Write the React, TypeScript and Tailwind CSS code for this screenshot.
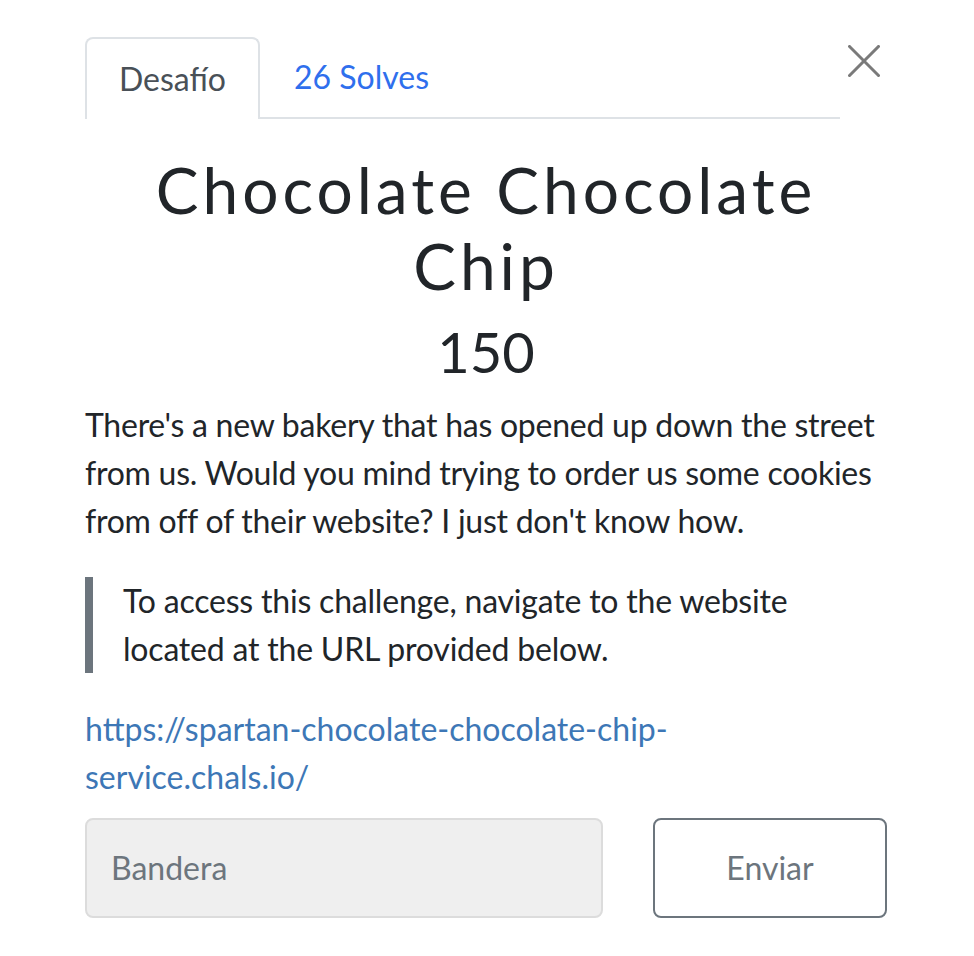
import React from "react";

export default function App() {
  return (
    <div
      className="w-[974px] h-[956px] bg-white text-[#212529]"
      style={{ fontFamily: "Lato, 'Noto Sans', sans-serif" }}
    >
      <div className="pl-[85px] pr-[87px] pt-[37px]">
        <div className="flex items-start">
          <div className="flex flex-1 border-b-2 border-[#dee2e6] mr-[7px]">
            <div className="h-[82px] mb-[-2px] px-[32px] flex items-center border-2 border-b-0 border-[#dee2e6] rounded-t-[8px] bg-white text-[#495057] text-[32px]">
              Desafío
            </div>
            <div className="h-[80px] px-[34px] flex items-center text-[#2f6fed] text-[32px]">
              26 Solves
            </div>
          </div>
          <button className="mt-[8px] w-[40px] h-[32px] flex items-center justify-end pr-[7px]">
            <svg width="32" height="32" viewBox="0 0 32 32">
              <path d="M1.5 1.5 L30.5 30.5 M30.5 1.5 L1.5 30.5" stroke="#7a7a7a" strokeWidth="3" strokeLinecap="square" />
            </svg>
          </button>
        </div>

        <h2 className="mt-[33px] text-center text-[64px] leading-[76px] tracking-[4px] font-normal">
          Chocolate Chocolate Chip
        </h2>
        <h3 className="mt-[14px] text-center text-[56px] leading-[67px] font-normal">150</h3>

        <p className="mt-[16px] mr-[-16px] text-[32px] leading-[48px] tracking-[-0.25px]">
          There's a new bakery that has opened up down the street from us. Would you mind trying to
          order us some cookies from off of their website? I just don't know how.
        </p>

        <blockquote className="mt-[32px] border-l-[8px] border-[#6c757d] pl-[30px] text-[32px] leading-[48px] tracking-[-0.2px]">
          To access this challenge, navigate to the website located at the URL provided below.
        </blockquote>

        <p className="mt-[32px] text-[32px] leading-[48px] text-[#3d77b6]">
          https://spartan-chocolate-chocolate-chip-
          <br />
          service.chals.io/
        </p>

        <div className="mt-[17px] flex gap-[50px]">
          <div className="w-[518px] h-[100px] bg-[#efefef] border-2 border-[#dcdcdc] rounded-[8px] flex items-center pl-[24px] text-[32px] text-[#6c757d]">
            Bandera
          </div>
          <button className="w-[234px] h-[100px] bg-white border-2 border-[#6c757d] rounded-[8px] text-[32px] text-[#6c757d]">
            Enviar
          </button>
        </div>
      </div>
    </div>
  );
}
